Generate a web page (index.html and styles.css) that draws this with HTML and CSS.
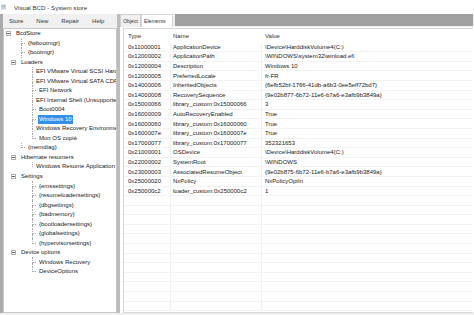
FILE: index.html
```html
<!DOCTYPE html>
<html lang="en">
<head>
    <meta charset="UTF-8">
    <title>Visual BCD - System store</title>
    <link rel="stylesheet" href="styles.css">
</head>
<body>
<div class="window">

    <!-- Title bar -->
    <div class="titlebar">
        <svg class="app-icon" width="6" height="6" viewBox="0 0 6 6">
            <rect x="0" y="0.5" width="5" height="5" fill="#c9d6e3"/>
            <rect x="1" y="1.5" width="3" height="1" fill="#8fa6bd"/>
        </svg>
        <span>Visual BCD - System store</span>
    </div>

    <div class="main">
        <div class="edge"></div>

        <!-- Left side: menu + tree -->
        <div class="left">
            <div class="menubar">
                <span>Store</span>
                <span>New</span>
                <span>Repair</span>
                <span>Help</span>
            </div>
            <div class="tree">
                <div class="node root"><span class="exp"></span><span class="label">BcdStore</span></div>
                <div class="node leaf1"><span class="branch"></span><span class="label">{fwbootmgr}</span></div>
                <div class="node leaf1"><span class="branch"></span><span class="label">{bootmgr}</span></div>
                <div class="node parent1"><span class="exp"></span><span class="label">Loaders</span></div>
                <div class="node leaf2"><span class="branch"></span><span class="label">EFI VMware Virtual SCSI Hard Drive</span></div>
                <div class="node leaf2"><span class="branch"></span><span class="label">EFI VMware Virtual SATA CDROM Drive</span></div>
                <div class="node leaf2"><span class="branch"></span><span class="label">EFI Network</span></div>
                <div class="node leaf2"><span class="branch"></span><span class="label">EFI Internal Shell (Unsupported option)</span></div>
                <div class="node leaf2"><span class="branch"></span><span class="label">Boot0004</span></div>
                <div class="node leaf2"><span class="branch"></span><span class="label selected">Windows 10</span></div>
                <div class="node leaf2"><span class="branch"></span><span class="label">Windows Recovery Environment</span></div>
                <div class="node leaf2"><span class="branch last"></span><span class="label">Mon OS copié</span></div>
                <div class="node leaf1"><span class="branch last"></span><span class="label">{memdiag}</span></div>
                <div class="node parent1"><span class="exp"></span><span class="label">Hibernate resumers</span></div>
                <div class="node leaf2"><span class="branch last"></span><span class="label">Windows Resume Application</span></div>
                <div class="node parent1"><span class="exp"></span><span class="label">Settings</span></div>
                <div class="node leaf2"><span class="branch"></span><span class="label">{emssettings}</span></div>
                <div class="node leaf2"><span class="branch"></span><span class="label">{resumeloadersettings}</span></div>
                <div class="node leaf2"><span class="branch"></span><span class="label">{dbgsettings}</span></div>
                <div class="node leaf2"><span class="branch"></span><span class="label">{badmemory}</span></div>
                <div class="node leaf2"><span class="branch"></span><span class="label">{bootloadersettings}</span></div>
                <div class="node leaf2"><span class="branch"></span><span class="label">{globalsettings}</span></div>
                <div class="node leaf2"><span class="branch last"></span><span class="label">{hypervisorsettings}</span></div>
                <div class="node parent1"><span class="exp"></span><span class="label">Device options</span></div>
                <div class="node leaf2"><span class="branch"></span><span class="label">Windows Recovery</span></div>
                <div class="node leaf2"><span class="branch last"></span><span class="label">DeviceOptions</span></div>
            </div>
        </div>

        <div class="splitter"></div>

        <!-- Right side: tabs + list view -->
        <div class="right">
            <div class="tabstrip">
                <span class="tab">Object</span>
                <span class="tab active">Elements</span>
                <div class="tabfill"></div>
            </div>
            <div class="tabpage">
                <div class="list">
                    <div class="row head"><span>Type</span><span>Name</span><span>Value</span></div>
                    <div class="row"><span>0x11000001</span><span>ApplicationDevice</span><span>\Device\HarddiskVolume4(C:)</span></div>
                    <div class="row"><span>0x12000002</span><span>ApplicationPath</span><span>\WINDOWS\system32\winload.efi</span></div>
                    <div class="row"><span>0x12000004</span><span>Description</span><span>Windows 10</span></div>
                    <div class="row"><span>0x12000005</span><span>PreferredLocale</span><span>fr-FR</span></div>
                    <div class="row"><span>0x14000006</span><span>InheritedObjects</span><span>{6efb52bf-1766-41db-a6b3-0ee5eff72bd7}</span></div>
                    <div class="row"><span>0x14000008</span><span>RecoverySequence</span><span>{9e02b877-6b72-11e6-b7a6-e3afb9b3849a}</span></div>
                    <div class="row"><span>0x15000066</span><span>library_custom:0x15000066</span><span>3</span></div>
                    <div class="row"><span>0x16000009</span><span>AutoRecoveryEnabled</span><span>True</span></div>
                    <div class="row"><span>0x16000060</span><span>library_custom:0x16000060</span><span>True</span></div>
                    <div class="row"><span>0x1600007e</span><span>library_custom:0x1600007e</span><span>True</span></div>
                    <div class="row"><span>0x17000077</span><span>library_custom:0x17000077</span><span>352321653</span></div>
                    <div class="row"><span>0x21000001</span><span>OSDevice</span><span>\Device\HarddiskVolume4(C:)</span></div>
                    <div class="row"><span>0x22000002</span><span>SystemRoot</span><span>\WINDOWS</span></div>
                    <div class="row"><span>0x23000003</span><span>AssociatedResumeObject</span><span>{9e02b875-6b72-11e6-b7a6-e3afb9b3849a}</span></div>
                    <div class="row"><span>0x25000020</span><span>NxPolicy</span><span>NxPolicyOptIn</span></div>
                    <div class="row"><span>0x250000c2</span><span>loader_custom:0x250000c2</span><span>1</span></div>
                    <div class="row"><span></span><span></span><span></span></div>
                    <div class="row"><span></span><span></span><span></span></div>
                    <div class="row"><span></span><span></span><span></span></div>
                    <div class="row"><span></span><span></span><span></span></div>
                    <div class="row"><span></span><span></span><span></span></div>
                    <div class="row"><span></span><span></span><span></span></div>
                    <div class="row"><span></span><span></span><span></span></div>
                    <div class="row"><span></span><span></span><span></span></div>
                    <div class="row"><span></span><span></span><span></span></div>
                    <div class="row"><span></span><span></span><span></span></div>
                    <div class="row"><span></span><span></span><span></span></div>
                    <div class="row"><span></span><span></span><span></span></div>
                </div>
            </div>
        </div>
    </div>
</div>
</body>
</html>
```

FILE: styles.css
```css
body {
    margin: 0;
    font-family: "Liberation Sans", Arial, sans-serif;
    font-size: 6px;
    color: #222;
    background-color: #f0f0f0;
    overflow: hidden;
}

.window {
    width: 474px;
    height: 315px;
    display: flex;
    flex-direction: column;
}

/* Title bar */
.titlebar {
    height: 14px;
    background-color: #fff;
    display: flex;
    align-items: center;
    gap: 7px;
    padding-left: 1px;
    font-size: 6.2px;
    color: #333;
}

.main {
    flex: 1;
    display: flex;
    padding-bottom: 2px;
    min-height: 0;
}

.edge {
    width: 3px;
    background-color: #ababab;
}

/* Left pane */
.left {
    width: 114px;
    display: flex;
    flex-direction: column;
}

.menubar {
    height: 14px;
    display: flex;
    align-items: center;
    padding-left: 6px;
    gap: 13px;
    color: #333;
}

.tree {
    flex: 1;
    background-color: #fff;
    border: 1px solid #c8c8c8;
    overflow: hidden;
    white-space: nowrap;
}

.node {
    height: 9.52px;
    display: flex;
    align-items: center;
}

.node.root { padding-left: 2px; }
.node.parent1 { padding-left: 7px; }
.node.leaf1 { padding-left: 17px; }
.node.leaf2 { padding-left: 28px; }

.exp {
    width: 5px;
    height: 5px;
    border: 1px solid #b0b0b0;
    box-sizing: border-box;
    display: flex;
    align-items: center;
    justify-content: center;
    margin-right: 4px;
}

.exp::after {
    content: "";
    width: 3px;
    height: 1px;
    background-color: #666;
}

.branch {
    align-self: stretch;
    width: 4px;
    display: flex;
    flex-direction: column;
    margin-right: 2px;
}

.branch::before {
    content: "";
    flex: 1;
    border-left: 1px dotted #a8a8a8;
    border-bottom: 1px dotted #a8a8a8;
}

.branch::after {
    content: "";
    flex: 1;
    border-left: 1px dotted #a8a8a8;
}

.branch.last::after {
    border-left-color: transparent;
}

.label {
    padding: 1px 1px;
    line-height: 7px;
}

.label.selected {
    background-color: #3390e8;
    color: #fff;
}

.splitter {
    width: 3px;
    background-color: #bdbdbd;
}

/* Right pane */
.right {
    flex: 1;
    display: flex;
    flex-direction: column;
    min-width: 0;
}

.tabstrip {
    height: 13px;
    display: flex;
    align-items: stretch;
    padding-right: 1px;
    font-size: 5.2px;
}

.tab {
    display: flex;
    align-items: center;
    padding: 0 2px;
    border: 1px solid #d0d0d0;
    border-bottom: none;
    background-color: #f0f0f0;
    color: #333;
}

.tab.active {
    background-color: #fff;
    border-color: #d8d8d8;
    padding: 0 6px 0 2px;
}

.tabfill {
    flex: 1;
    background-color: #a0a0a0;
    margin-left: 2px;
    margin-bottom: 1px;
}

.tabpage {
    flex: 1;
    background-color: #fff;
    padding: 1px 1px 0 3px;
    display: flex;
    min-height: 0;
}

.list {
    flex: 1;
    border: 1px solid #d6d6d6;
    border-right: none;
    overflow: hidden;
}

.row {
    display: grid;
    grid-template-columns: 47px 91px 1fr;
    height: 9.6px;
    box-sizing: border-box;
    border-bottom: 1px solid #f3f3f3;
    white-space: nowrap;
}

.row span {
    display: flex;
    align-items: center;
    border-right: 1px solid #f0f0f0;
    overflow: hidden;
}

.row span:nth-child(1) { padding-left: 4px; }
.row span:nth-child(2) { padding-left: 2px; }
.row span:nth-child(3) { padding-left: 3px; border-right: none; }

.row.head {
    height: 13.6px;
    border-bottom: none;
    color: #333;
}

.row.head span {
    border-right: none;
}
```
